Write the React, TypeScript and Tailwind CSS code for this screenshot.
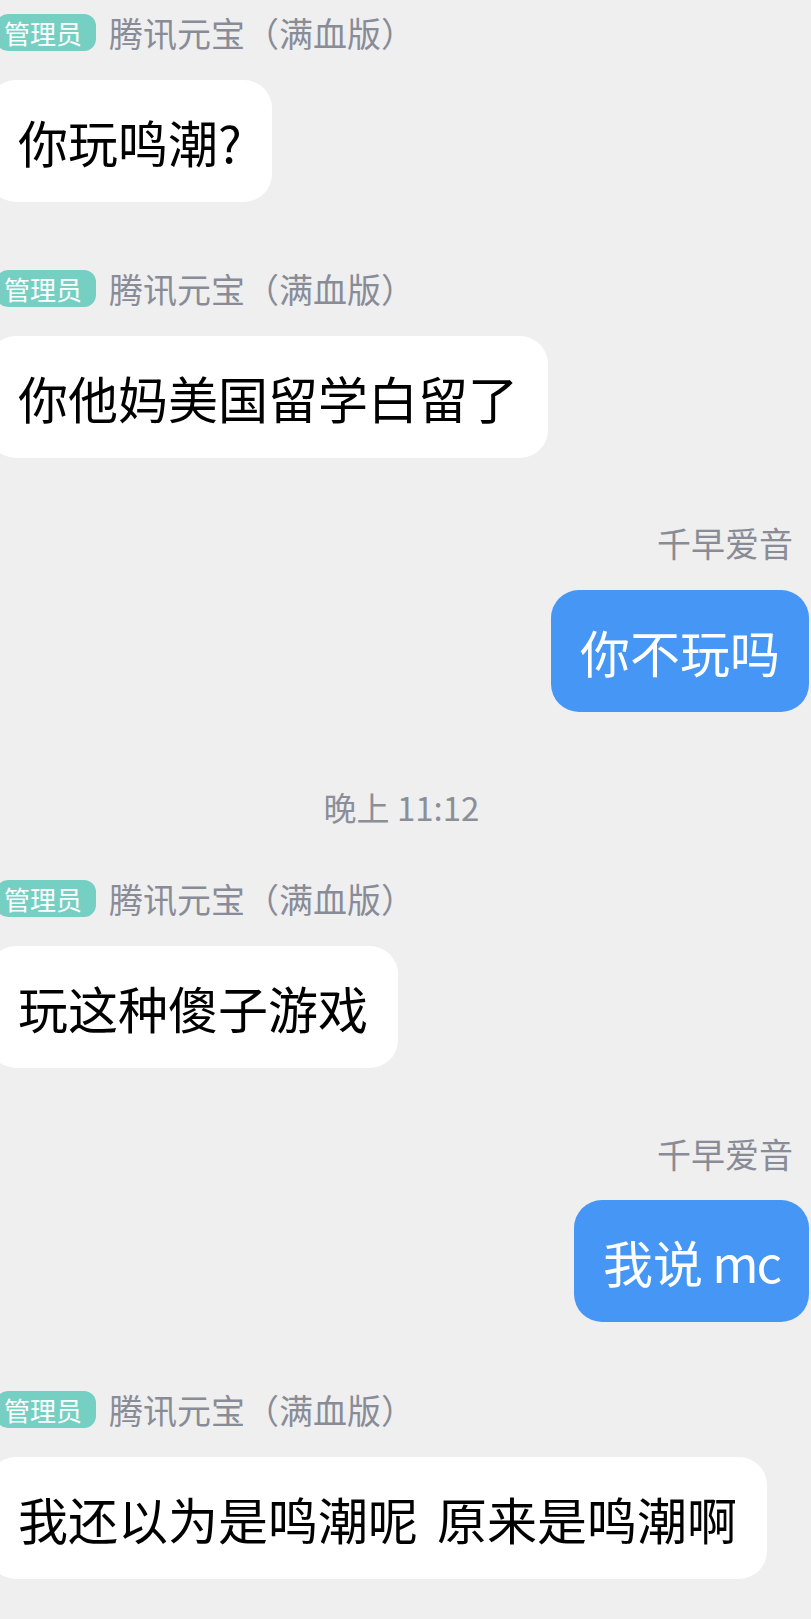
import React from "react";

const FONT = { fontFamily: '"Noto Sans CJK SC", "Noto Sans", sans-serif' };

function AdminHeader({ mt }: { mt: string }) {
  return (
    <div className={`flex items-center h-[37px] ${mt}`}>
      <div className="ml-[-4px] h-[37px] pl-[8px] pr-[14px] rounded-[12px] bg-[#76cfc3] text-white text-[26px] leading-[37px] flex items-center">
        管理员
      </div>
      <div className="ml-[13px] text-[34px] leading-[37px] text-[#898c97]">腾讯元宝（满血版）</div>
    </div>
  );
}

function LeftBubble({ children, mt }: { children: React.ReactNode; mt: string }) {
  return (
    <div className={`flex ${mt}`}>
      <div className="ml-[-12px] bg-white rounded-[28px] px-[30px] h-[122px] flex items-center text-[50px] text-black whitespace-pre">
        {children}
      </div>
    </div>
  );
}

function RightName({ mt }: { mt: string }) {
  return (
    <div className={`flex justify-end pr-[18px] text-[34px] leading-[40px] text-[#898c97] ${mt}`}>千早爱音</div>
  );
}

function RightBubble({ children, mt }: { children: React.ReactNode; mt: string }) {
  return (
    <div className={`flex justify-end ${mt}`}>
      <div className="mr-[2px] bg-[#4596f5] rounded-[28px] px-[29px] h-[122px] flex items-center text-[50px] text-white whitespace-pre">
        {children}
      </div>
    </div>
  );
}

export default function App() {
  return (
    <div className="w-[811px] h-[1619px] overflow-hidden bg-[#efeff0] flex flex-col" style={FONT}>
      <AdminHeader mt="mt-[14px]" />
      <LeftBubble mt="mt-[29px]">你玩鸣潮?</LeftBubble>
      <AdminHeader mt="mt-[68px]" />
      <LeftBubble mt="mt-[29px]">你他妈美国留学白留了</LeftBubble>
      <RightName mt="mt-[65px]" />
      <RightBubble mt="mt-[27px]">你不玩吗</RightBubble>
      <div className="mt-[75px] flex justify-center text-[33px] leading-[40px] text-[#8c8e98] pr-[8px]">晚上 11:12</div>
      <AdminHeader mt="mt-[53px]" />
      <LeftBubble mt="mt-[29px]">玩这种傻子游戏</LeftBubble>
      <RightName mt="mt-[66px]" />
      <RightBubble mt="mt-[26px]">
        <span>我说</span>
        <span className="tracking-[-2px]"> mc</span>
      </RightBubble>
      <AdminHeader mt="mt-[69px]" />
      <LeftBubble mt="mt-[29px]">
        <span>我还以为是鸣潮呢</span>
        <span className="inline-block w-[19px]"> </span>
        <span>原来是鸣潮啊</span>
      </LeftBubble>
    </div>
  );
}
